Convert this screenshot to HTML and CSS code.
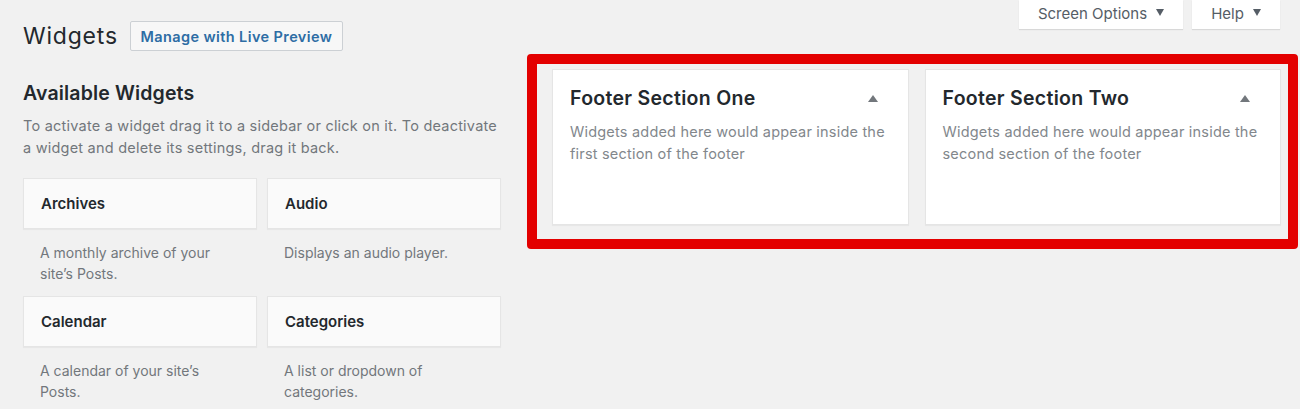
FILE: index.html
```html
<!DOCTYPE html>
<html lang="en">
<head>
<meta charset="utf-8">
<title>Widgets</title>
<link rel="stylesheet" href="styles.css">
</head>
<body>
<div class="screen-meta">
  <button class="meta-btn meta-screen">Screen Options <span class="tri-down"></span></button>
  <button class="meta-btn meta-help">Help <span class="tri-down"></span></button>
</div>
<div class="wrap">
  <div class="page-head">
    <h1 class="page-title">Widgets</h1>
    <a class="title-action" href="#">Manage with Live Preview</a>
  </div>
  <div class="columns">
    <div class="col-left">
      <h2 class="avail-title">Available Widgets</h2>
      <p class="avail-desc">To activate a widget drag it to a sidebar or click on it. To deactivate a widget and delete its settings, drag it back.</p>
      <div class="widget-grid">
        <div class="widget">
          <div class="widget-top">Archives</div>
          <div class="widget-desc">A monthly archive of your site’s Posts.</div>
        </div>
        <div class="widget">
          <div class="widget-top">Audio</div>
          <div class="widget-desc">Displays an audio player.</div>
        </div>
        <div class="widget">
          <div class="widget-top">Calendar</div>
          <div class="widget-desc">A calendar of your site’s Posts.</div>
        </div>
        <div class="widget">
          <div class="widget-top">Categories</div>
          <div class="widget-desc">A list or dropdown of categories.</div>
        </div>
      </div>
    </div>
    <div class="col-right">
      <div class="highlight">
        <div class="sidebar">
          <div class="sidebar-head">
            <h3 class="sidebar-title">Footer Section One</h3>
            <span class="tri-up"></span>
          </div>
          <p class="sidebar-desc">Widgets added here would appear inside the first section of the footer</p>
        </div>
        <div class="sidebar">
          <div class="sidebar-head">
            <h3 class="sidebar-title">Footer Section Two</h3>
            <span class="tri-up"></span>
          </div>
          <p class="sidebar-desc">Widgets added here would appear inside the second section of the footer</p>
        </div>
      </div>
    </div>
  </div>
</div>
</body>
</html>
```
FILE: styles.css
```css
html, body {
  margin: 0;
  padding: 0;
}
body {
  background: #f1f1f1;
  font-family: Inter, "Noto Sans", sans-serif;
  color: #23282d;
  width: 1300px;
  height: 409px;
  overflow: hidden;
}
.screen-meta {
  float: right;
  display: flex;
  gap: 9px;
  margin-right: 20px;
}
.meta-btn {
  height: 29px;
  border: none;
  background: #fff;
  box-shadow: 0 1px 1px rgba(0,0,0,0.1);
  font-family: inherit;
  font-size: 15px;
  color: #555d66;
  padding: 0 0 2px;
  display: flex;
  align-items: center;
  justify-content: center;
  gap: 9px;
}
.meta-screen { width: 164px; }
.meta-help { width: 88px; }
.tri-down {
  width: 0; height: 0;
  border-left: 4px solid transparent;
  border-right: 4px solid transparent;
  border-top: 7px solid #555d66;
  margin-top: -2px;
}
.wrap {
  padding: 21px 0 0 23px;
}
.page-head {
  display: flex;
  align-items: center;
  gap: 12px;
  height: 30px;
}
.page-title {
  margin: 0;
  font-size: 23px;
  font-weight: 400;
  letter-spacing: 0.8px;
  line-height: 30px;
  color: #23282d;
}
.title-action {
  box-sizing: border-box;
  height: 30px;
  width: 213px;
  border: 1px solid #ccd0d4;
  border-radius: 2px;
  background: #f7f7f7;
  color: #2e6da4;
  text-decoration: none;
  font-size: 14.5px;
  font-weight: 600;
  letter-spacing: 0.4px;
  display: flex;
  align-items: center;
  justify-content: center;
}
.columns {
  display: flex;
  margin-top: 3px;
}
.col-left {
  width: 478px;
  margin-right: 26px;
}
.avail-title {
  margin: 26px 0 0;
  font-size: 19.5px;
  font-weight: 600;
  letter-spacing: 0.15px;
  line-height: 26px;
  color: #23282d;
}
.avail-desc {
  margin: 9px 0 0;
  font-size: 14.5px;
  line-height: 22px;
  letter-spacing: 0.22px;
  color: #72777c;
}
.widget-grid {
  margin-top: 19px;
  display: grid;
  grid-template-columns: 234px 234px;
  column-gap: 10px;
}
.widget-top {
  box-sizing: border-box;
  height: 51px;
  background: #fafafa;
  border: 1px solid #e5e5e5;
  box-shadow: 0 1px 1px rgba(0,0,0,0.04);
  padding: 0 17px;
  display: flex;
  align-items: center;
  font-size: 15px;
  font-weight: 600;
  color: #23282d;
}
.widget-desc {
  box-sizing: border-box;
  padding: 13px 17px 0;
  width: 222px;
  height: 67px;
  font-size: 14px;
  line-height: 21px;
  color: #72777c;
}
.highlight {
  box-sizing: border-box;
  width: 771px;
  height: 195px;
  border: 10px solid #e30000;
  border-radius: 4px;
  padding: 5px 7px 0 15px;
  display: flex;
  gap: 16px;
}
.sidebar {
  box-sizing: border-box;
  width: 357px;
  height: 156px;
  background: #fff;
  border: 1px solid #e5e5e5;
  box-shadow: 0 1px 1px rgba(0,0,0,0.04);
  padding: 0 18px 0 17px;
}
.sidebar-head {
  display: flex;
  justify-content: space-between;
  align-items: center;
  margin-top: 15px;
  height: 26px;
}
.sidebar-title {
  margin: 0;
  font-size: 19.5px;
  font-weight: 600;
  letter-spacing: 0.3px;
  line-height: 26px;
  color: #23282d;
}
.tri-up {
  width: 0; height: 0;
  border-left: 5px solid transparent;
  border-right: 5px solid transparent;
  border-bottom: 7px solid #72777c;
  margin-right: 12px;
}
.sidebar-desc {
  margin: 10px 0 0;
  font-size: 14.5px;
  line-height: 22px;
  letter-spacing: 0.2px;
  color: #82878c;
}
```
